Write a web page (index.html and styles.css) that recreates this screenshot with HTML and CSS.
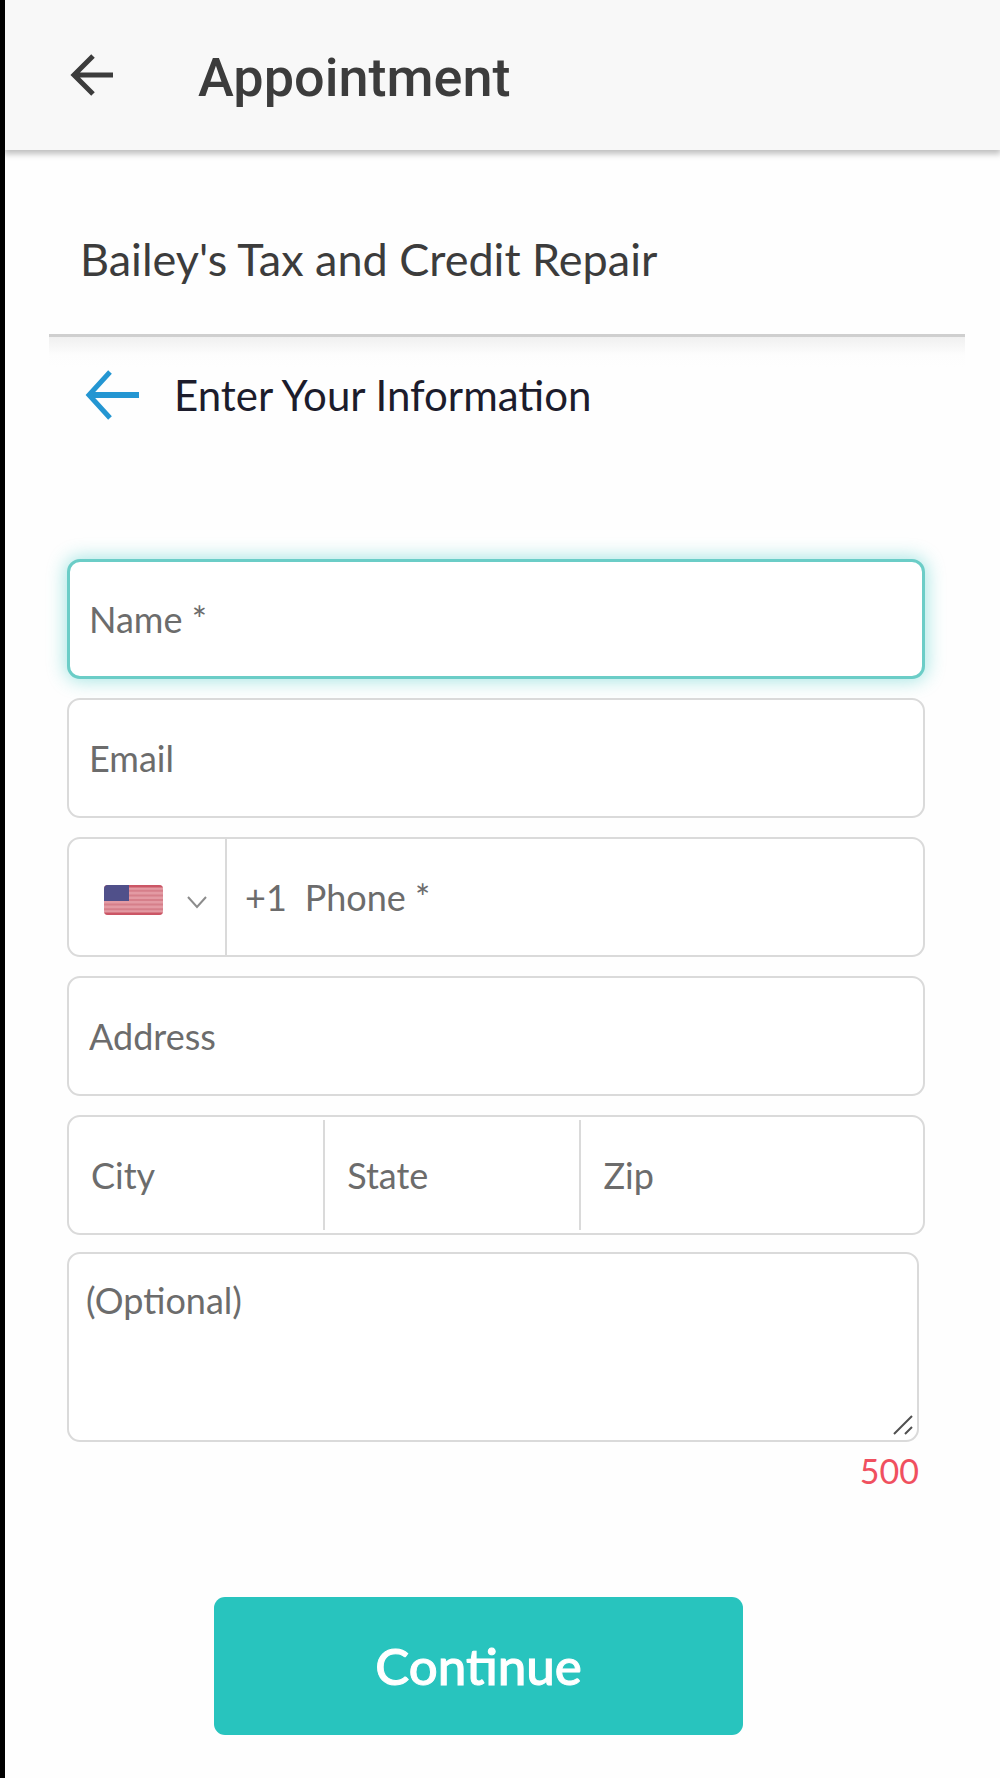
FILE: index.html
```html
<!DOCTYPE html>
<html lang="en">
<head>
  <meta charset="UTF-8" />
  <meta name="viewport" content="width=device-width, initial-scale=1.0"/>
  <title>Appointment</title>
  <link rel="stylesheet" href="styles.css">
</head>
<body>
  <header class="topbar">
    <a class="back" href="#" aria-label="Back">
      <svg width="44" height="42" viewBox="0 0 44 42" fill="none" stroke="#3c3c3c" stroke-width="5">
        <path d="M43 21H4M23 2L4 21l19 19"/>
      </svg>
    </a>
    <h1>Appointment</h1>
  </header>

  <main>
    <h2 class="business">Bailey's Tax and Credit Repair</h2>

    <div class="step">
      <a class="step-back" href="#" aria-label="Previous step">
        <svg width="54" height="50" viewBox="0 0 54 50" fill="none" stroke="#2496d2">
          <path d="M54 25H4" stroke-width="6"/>
          <path d="M25 2L4 25l21 23" stroke-width="5"/>
        </svg>
      </a>
      <h3>Enter Your Information</h3>
    </div>

    <form id="infoForm">
      <input class="field active" type="text" name="name" placeholder="Name *" aria-label="Name" required />
      <input class="field" type="email" name="email" placeholder="Email" aria-label="Email" />

      <div class="field group">
        <div class="country">
          <select name="country" aria-label="Country code">
            <option value="us">US</option>
          </select>
          <svg class="flag" width="59" height="30" viewBox="0 0 59 30">
            <clipPath id="flagShape"><rect width="59" height="30" rx="4"/></clipPath>
            <g clip-path="url(#flagShape)">
              <rect width="59" height="30" fill="#e39aa3"/>
              <path d="M0 5.8h59M0 10.4h59M0 15h59M0 19.6h59M0 24.2h59" stroke="#d67f8a" stroke-width="2"/>
              <path d="M0 1h59M0 29h59" stroke="#cb5666" stroke-width="3"/>
              <rect width="25" height="16" fill="#50508a"/>
            </g>
          </svg>
          <svg class="chevron" width="20" height="13" viewBox="0 0 20 13" fill="none" stroke="#8c8c8c" stroke-width="2">
            <path d="M1 1l9 10 9-10"/>
          </svg>
        </div>
        <span class="prefix">+1</span>
        <input class="phone" type="tel" name="phone" placeholder="Phone *" aria-label="Phone" required />
      </div>

      <input class="field" type="text" name="address" placeholder="Address" aria-label="Address" />

      <div class="field group place">
        <input type="text" name="city" placeholder="City" aria-label="City" />
        <input type="text" name="state" placeholder="State" aria-label="State" />
        <input type="text" name="zip" placeholder="Zip" aria-label="Zip" />
      </div>

      <div class="notes">
        <textarea name="notes" maxlength="500" placeholder="(Optional)" aria-label="Notes"></textarea>
        <svg class="grip" width="20" height="20" viewBox="0 0 20 20" stroke="#505050" stroke-width="2">
          <path d="M1 19L19 1M12 19l7-7"/>
        </svg>
        <div class="count" id="count">500</div>
      </div>

      <button type="submit">Continue</button>
    </form>
  </main>

  <script>
    const notes = document.querySelector('textarea');
    const count = document.getElementById('count');

    notes.addEventListener('input', () => {
      count.textContent = 500 - notes.value.length;
    });

    document.getElementById('infoForm').addEventListener('submit', (e) => {
      e.preventDefault();
    });
  </script>
</body>
</html>
```
FILE: styles.css
```css
* {
  box-sizing: border-box;
}
body {
  margin: 0;
  min-height: 100vh;
  border-left: 5px solid #000;
  font-family: Lato, sans-serif;
  color: #3c3c3c;
  background: #fefefe;
}
h1, h2, h3 {
  margin: 0;
}
svg {
  display: block;
}
.topbar {
  display: flex;
  align-items: center;
  gap: 84px;
  height: 150px;
  padding-left: 65px;
  background: #f8f8f8;
  box-shadow: 0 3px 6px 1px rgba(0,0,0,0.25);
}
.topbar h1 {
  font-family: Roboto, sans-serif;
  font-size: 54px;
  line-height: 64px;
  font-weight: 500;
  padding-top: 5px;
}
main {
  padding: 0 35px 43px 44px;
}
.business {
  padding: 95px 31px 61px;
  border-bottom: 3px solid #cfcfcf;
  font-size: 45px;
  line-height: 28px;
  font-weight: 400;
}
.step {
  display: flex;
  align-items: center;
  gap: 35px;
  height: 116px;
  padding-left: 36px;
  background: linear-gradient(#f0f0f0, #fdfdfd 18px, #fefefe 30px);
}
.step h3 {
  font-size: 42px;
  line-height: 50px;
  font-weight: 400;
  color: #1c1c2c;
}
form {
  display: flex;
  flex-direction: column;
  gap: 19px;
  padding: 106px 40px 0 18px;
}
input, textarea, select, .prefix {
  font-family: inherit;
  font-size: 36px;
  color: #6c6c6c;
}
input, select {
  min-width: 0;
  border: none;
  outline: none;
  background: transparent;
}
::placeholder {
  color: #6c6c6c;
  opacity: 1;
}
.field {
  width: 100%;
  height: 120px;
  padding: 0 20px;
  border: 2px solid #dadada;
  border-radius: 13px;
  background: #fff;
}
.field.active,
.field:focus {
  padding: 0 19px;
  border: 3px solid #6bcdc7;
  box-shadow: 0 0 18px 2px rgba(38,196,189,0.4);
}
.group {
  display: flex;
  align-items: center;
  padding: 0;
}
.country {
  position: relative;
  width: 158px;
  height: 100%;
  border-right: 2px solid #dadada;
}
.country select {
  width: 100%;
  height: 100%;
  appearance: none;
  color: transparent;
}
.country option {
  color: #333;
}
/* flag and arrow sit over the select */
.flag,
.chevron {
  position: absolute;
  pointer-events: none;
}
.flag {
  top: 46px;
  left: 35px;
}
.chevron {
  top: 57px;
  right: 18px;
}
.prefix {
  padding: 0 18px;
}
.phone {
  flex: 1;
  padding: 0;
}
.place {
  display: grid;
  grid-template-columns: 3fr 3fr 4fr;
}
.place input {
  height: 110px;
  padding: 0 22px;
  border-right: 2px solid #dadada;
}
.place input:last-child {
  border-right: none;
}
.notes {
  position: relative;
  margin: -2px 6px 0 0;
}
textarea {
  display: block;
  width: 100%;
  height: 190px;
  padding: 24px 17px;
  border: 2px solid #dadada;
  border-radius: 13px;
  outline: none;
  resize: none;
  line-height: 44px;
  background: #fff;
}
.grip {
  position: absolute;
  top: 163px;
  right: 6px;
  pointer-events: none;
}
.count {
  padding-top: 7px;
  font-size: 34px;
  line-height: 44px;
  text-align: right;
  color: #f0505f;
}
button {
  width: 529px;
  max-width: 100%;
  margin: 85px 0 0 147px;
  padding: 38px;
  border: none;
  border-radius: 11px;
  font-family: inherit;
  font-size: 51px;
  line-height: 62px;
  font-weight: 500;
  -webkit-text-stroke: 1px;
  color: #fff;
  background: #28c4be;
  cursor: pointer;
}
```
